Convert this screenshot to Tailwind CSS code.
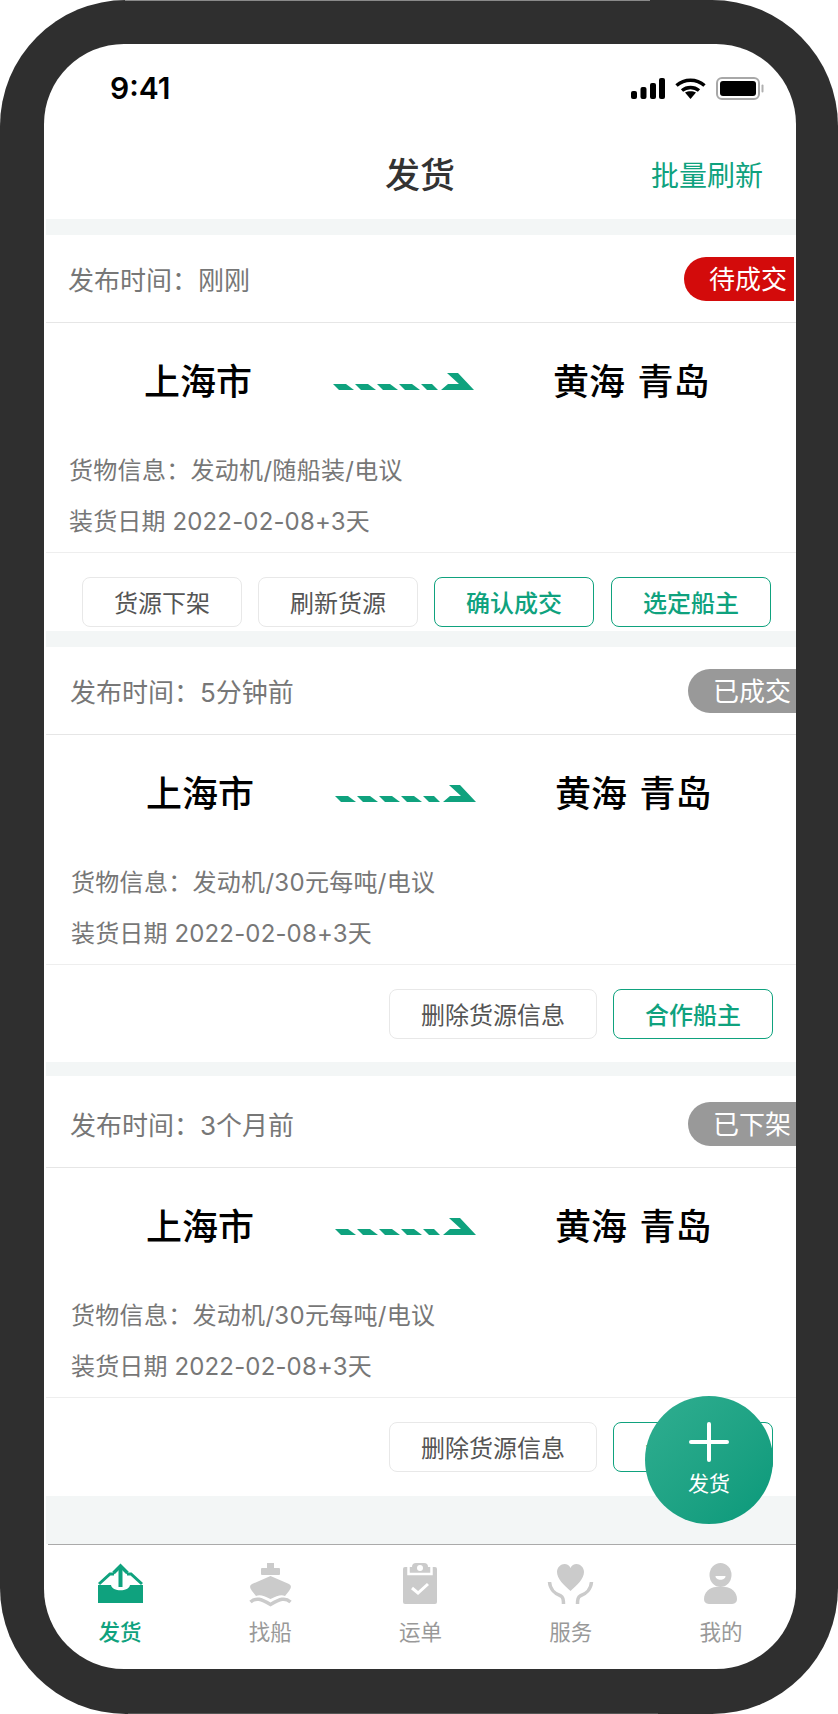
<!DOCTYPE html>
<html lang="zh">
<head>
    <meta charset="UTF-8">
    <meta name="viewport" content="width=device-width, initial-scale=1.0">
    <title>发货</title>
    <script src="https://cdn.jsdelivr.net/npm/@tailwindcss/browser@4"></script>
</head>
<body class="bg-white font-['Inter','Noto_Sans_CJK_SC',sans-serif]">
    <div class="relative w-[838px] h-[1714px] bg-[#2f2f2f] rounded-[126px] pt-[44px] pl-[44px] overflow-hidden">
        <div class="absolute left-[125px] top-0 w-[525px] h-[1px] bg-[#8a8a8a]"></div>
        <div class="absolute left-[128px] bottom-0 w-[530px] h-[1px] bg-[#555555]"></div>
        <div class="relative w-[752px] h-[1625px] bg-white rounded-[80px] overflow-hidden flex flex-col">
            <!-- status bar -->
            <div class="h-[85px] flex justify-between pt-[33px] pl-[66px] pr-[32px]">
                <span class="font-semibold text-[30px] leading-[22px] text-black">9:41</span>
                <div class="flex gap-[10px] h-[23px]">
                    <svg width="34" height="21" viewBox="0 0 34 21" class="mt-[1px]" fill="#000">
                        <rect x="0" y="13" width="6" height="8" rx="2"/>
                        <rect x="9.500" y="9" width="6" height="12" rx="2"/>
                        <rect x="19" y="5" width="6" height="16" rx="2"/>
                        <rect x="28" y="0" width="6" height="21" rx="2"/>
                    </svg>
                    <svg width="31" height="21" viewBox="0 0 31 21" class="mt-[1px]" fill="none" stroke="#000" stroke-width="3.500">
                        <path d="M1.500 7.500C9.500 0.500 21.500 0.500 29.500 7.500"/>
                        <path d="M7 12.500C12 8.500 19 8.500 24 12.500"/>
                        <path d="M10 14.500L15.500 21L21 14.500C18 12.800 13 12.800 10 14.500Z" fill="#000" stroke="none"/>
                    </svg>
                    <svg width="48" height="23" viewBox="0 0 48 23">
                        <rect x="1" y="1" width="42" height="21" rx="5" fill="none" stroke="#a8a8a8" stroke-width="2"/>
                        <rect x="4" y="4" width="36" height="15" rx="3" fill="#000"/>
                        <rect x="45.500" y="7.500" width="2" height="8" rx="1" fill="#b0b0b0"/>
                    </svg>
                </div>
            </div>

            <!-- nav -->
            <div class="relative h-[90px] flex items-center justify-center">
                <h1 class="text-[35px] font-medium text-[#333] leading-none mt-[2px]">发货</h1>
                <span class="absolute right-[33px] top-[33px] text-[28px] leading-[28px] text-[#0fa27e]">批量刷新</span>
            </div>

            <div class="ml-[2px] h-[16px] bg-[#f3f6f6]"></div>

            <!-- card 1 -->
            <div class="ml-[2px] bg-white">
                <div class="h-[87px] flex items-center justify-between pl-[22px] pr-[2px]">
                    <span class="mt-[4px] text-[26px] text-[#777] leading-none">发布时间：刚刚</span>
                    <span class="w-[110px] h-[44px] bg-[#d30b0b] rounded-l-full text-white text-[26px] leading-[45px] pl-[25px]">待成交</span>
                </div>
                <div class="h-[1px] bg-[#e6e6e6]"></div>
                <div class="h-[114px] flex items-center pt-[4px] pl-[98px]">
                    <span class="text-[36px] font-medium text-black leading-none">上海市</span>
                    <svg class="ml-[81px]" width="141" height="18" viewBox="0 0 141 18" fill="#0fa27e">
                        <polygon points="0,11 13,11 21,17 6,17"/>
                        <polygon points="22,11 35,11 43,17 28,17"/>
                        <polygon points="44,11 57,11 65,17 50,17"/>
                        <polygon points="66,11 79,11 87,17 72,17"/>
                        <polygon points="88,11 99,11 105,17 94,17"/>
                        <polygon points="108,17 115,11 126,11 114,0 125,0 141,17"/>
                    </svg>
                    <span class="ml-[79px] text-[36px] font-medium text-black leading-none [word-spacing:3px]">黄海 青岛</span>
                </div>
                <div class="h-[64px] flex items-center pt-[4px] pl-[23px] text-[24px] tracking-[0.3px] text-[#777]">货物信息：发动机/随船装/电议</div>
                <div class="h-[37px] flex items-center pt-[4px] pl-[23px] text-[24px] tracking-[0.15px] text-[#777]">装货日期 2022-02-08+3天</div>
                <div class="h-[14px]"></div>
                <div class="h-[1px] bg-[#eeeeee]"></div>
                <div class="h-[78px] pt-[24px] flex gap-[16px] pl-[36px]">
                    <button class="w-[160px] h-[50px] pt-[4px] rounded-[8px] border border-[#e8e8e8] text-[24px] text-[#555]">货源下架</button>
                    <button class="w-[160px] h-[50px] pt-[4px] rounded-[8px] border border-[#e8e8e8] text-[24px] text-[#555]">刷新货源</button>
                    <button class="w-[160px] h-[50px] pt-[4px] rounded-[8px] border border-[#0fa27e] text-[24px] font-medium text-[#0fa27e]">确认成交</button>
                    <button class="ml-[1px] w-[160px] h-[50px] pt-[4px] rounded-[8px] border border-[#0fa27e] text-[24px] font-medium text-[#0fa27e]">选定船主</button>
                </div>
            </div>

            <div class="ml-[2px] h-[16px] bg-[#f3f6f6]"></div>

            <!-- card 2 -->
            <div class="ml-[2px] bg-white">
                <div class="h-[87px] flex items-center justify-between pl-[24px]">
                    <span class="mt-[4px] text-[26px] text-[#777] leading-none">发布时间：5分钟前</span>
                    <span class="w-[110px] h-[44px] -mr-[2px] bg-[#999] rounded-l-full text-white text-[26px] leading-[45px] pl-[25px]">已成交</span>
                </div>
                <div class="h-[1px] bg-[#e6e6e6]"></div>
                <div class="h-[114px] flex items-center pt-[4px] pl-[100px]">
                    <span class="text-[36px] font-medium text-black leading-none">上海市</span>
                    <svg class="ml-[81px]" width="141" height="18" viewBox="0 0 141 18" fill="#0fa27e">
                        <polygon points="0,11 13,11 21,17 6,17"/>
                        <polygon points="22,11 35,11 43,17 28,17"/>
                        <polygon points="44,11 57,11 65,17 50,17"/>
                        <polygon points="66,11 79,11 87,17 72,17"/>
                        <polygon points="88,11 99,11 105,17 94,17"/>
                        <polygon points="108,17 115,11 126,11 114,0 125,0 141,17"/>
                    </svg>
                    <span class="ml-[79px] text-[36px] font-medium text-black leading-none [word-spacing:3px]">黄海 青岛</span>
                </div>
                <div class="h-[64px] flex items-center pt-[4px] pl-[25px] text-[24px] tracking-[0.3px] text-[#777]">货物信息：发动机/30元每吨/电议</div>
                <div class="h-[37px] flex items-center pt-[4px] pl-[25px] text-[24px] tracking-[0.15px] text-[#777]">装货日期 2022-02-08+3天</div>
                <div class="h-[14px]"></div>
                <div class="h-[1px] bg-[#eeeeee]"></div>
                <div class="h-[97px] pt-[24px] flex justify-end gap-[16px] pr-[23px]">
                    <button class="w-[208px] h-[50px] pt-[4px] rounded-[8px] border border-[#e8e8e8] text-[24px] text-[#555]">删除货源信息</button>
                    <button class="w-[160px] h-[50px] pt-[4px] rounded-[8px] border border-[#0fa27e] text-[24px] font-medium text-[#0fa27e]">合作船主</button>
                </div>
            </div>

            <div class="ml-[2px] h-[14px] bg-[#f3f6f6]"></div>

            <!-- card 3 -->
            <div class="ml-[2px] bg-white">
                <div class="h-[91px] pt-[4px] flex items-center justify-between pl-[24px]">
                    <span class="mt-[4px] text-[26px] text-[#777] leading-none">发布时间：3个月前</span>
                    <span class="w-[110px] h-[44px] -mr-[2px] bg-[#999] rounded-l-full text-white text-[26px] leading-[45px] pl-[25px]">已下架</span>
                </div>
                <div class="h-[1px] bg-[#e6e6e6]"></div>
                <div class="h-[114px] flex items-center pt-[4px] pl-[100px]">
                    <span class="text-[36px] font-medium text-black leading-none">上海市</span>
                    <svg class="ml-[81px]" width="141" height="18" viewBox="0 0 141 18" fill="#0fa27e">
                        <polygon points="0,11 13,11 21,17 6,17"/>
                        <polygon points="22,11 35,11 43,17 28,17"/>
                        <polygon points="44,11 57,11 65,17 50,17"/>
                        <polygon points="66,11 79,11 87,17 72,17"/>
                        <polygon points="88,11 99,11 105,17 94,17"/>
                        <polygon points="108,17 115,11 126,11 114,0 125,0 141,17"/>
                    </svg>
                    <span class="ml-[79px] text-[36px] font-medium text-black leading-none [word-spacing:3px]">黄海 青岛</span>
                </div>
                <div class="h-[64px] flex items-center pt-[4px] pl-[25px] text-[24px] tracking-[0.3px] text-[#777]">货物信息：发动机/30元每吨/电议</div>
                <div class="h-[37px] flex items-center pt-[4px] pl-[25px] text-[24px] tracking-[0.15px] text-[#777]">装货日期 2022-02-08+3天</div>
                <div class="h-[14px]"></div>
                <div class="h-[1px] bg-[#eeeeee]"></div>
                <div class="h-[98px] pt-[24px] flex justify-end gap-[16px] pr-[23px]">
                    <button class="w-[208px] h-[50px] pt-[4px] rounded-[8px] border border-[#e8e8e8] text-[24px] text-[#555]">删除货源信息</button>
                    <button class="w-[160px] h-[50px] pt-[4px] rounded-[8px] border border-[#0fa27e] text-[24px] font-medium text-[#0fa27e]">合作船主</button>
                </div>
            </div>

            <div class="ml-[2px] h-[48px] bg-[#f3f6f6]"></div>

            <!-- tab bar -->
            <div class="ml-[4px] h-[1px] bg-[#aaaaaa]"></div>
            <div class="flex-1 grid grid-cols-5 pt-[18px] pl-[1px] text-[21.500px] leading-[24px] text-[#999]">
                <div class="flex flex-col items-center">
                    <svg width="45" height="44" viewBox="0 0 45 44">
                        <g transform="translate(0 2)">
                            <path d="M0 20H13C14 27 31 27 32 20H45V38H0Z" fill="#0fa27e"/>
                            <path d="M1 19L12 9H16M44 19L33 9H29" fill="none" stroke="#0fa27e" stroke-width="3"/>
                            <path d="M22.500 22V2" stroke="#0fa27e" stroke-width="4" fill="none"/>
                            <path d="M15.500 8L22.500 1L29.500 8" stroke="#0fa27e" stroke-width="3.500" fill="none"/>
                        </g>
                    </svg>
                    <span class="mt-[13px] font-medium text-[#0fa27e]">发货</span>
                </div>
                <div class="flex flex-col items-center">
                    <svg width="43" height="44" viewBox="0 0 43 44" fill="#cbcbcb">
                        <rect x="18" y="0" width="7" height="6"/>
                        <rect x="12" y="5" width="19" height="7" rx="1"/>
                        <path d="M21.500 13L40 21C43 23 42 25 40 28L36 33C32 31 28 33 21.500 36C15 33 11 31 7 33L3 28C1 25 0 23 3 21Z"/>
                        <path d="M1.500 39C7 34 12 36 21.500 41.500C31 36 36 34 41.500 39" fill="none" stroke="#cbcbcb" stroke-width="3.500"/>
                    </svg>
                    <span class="mt-[13px]">找船</span>
                </div>
                <div class="flex flex-col items-center">
                    <svg width="34" height="44" viewBox="0 0 34 44" fill="#cbcbcb">
                        <rect x="0" y="4" width="34" height="37" rx="2"/>
                        <path d="M5.500 4V11H28.500V4" fill="none" stroke="#fff" stroke-width="2.500"/>
                        <rect x="9" y="0" width="16" height="9" rx="4" />
                        <circle cx="17" cy="5" r="3" fill="#fff"/>
                        <path d="M9 25L15 30L25 21" fill="none" stroke="#fff" stroke-width="3"/>
                    </svg>
                    <span class="mt-[13px]">运单</span>
                </div>
                <div class="flex flex-col items-center">
                    <svg width="47" height="44" viewBox="0 0 47 44" fill="none">
                        <path d="M23.500 28C17 22 10 16 10 9C10 4 14 1 17.500 1C20 1 22.500 2.500 23.500 5C24.500 2.500 27 1 29.500 1C33 1 37 4 37 9C37 16 30 22 23.500 28Z" fill="#cbcbcb"/>
                        <path d="M2.500 19C3 26 8 31 14 33C16 34 16.500 37 16.500 41M44.500 19C44 26 39 31 33 33C31 34 30.500 37 30.500 41" stroke="#cbcbcb" stroke-width="3.500"/>
                    </svg>
                    <span class="mt-[13px]">服务</span>
                </div>
                <div class="flex flex-col items-center">
                    <svg width="33" height="44" viewBox="0 0 33 44" fill="#cbcbcb">
                        <ellipse cx="16.500" cy="12" rx="11" ry="12"/>
                        <path d="M11.500 13H21.500C21.500 18 11.500 18 11.500 13Z" fill="#fff"/>
                        <path d="M0 36C0 29 6 24 12 24H21C27 24 33 29 33 36C33 40 30 41 27 41H6C3 41 0 40 0 36Z"/>
                    </svg>
                    <span class="mt-[13px]">我的</span>
                </div>
            </div>

            <!-- floating button -->
            <div class="absolute left-[601px] top-[1352px] w-[128px] h-[128px] rounded-full bg-gradient-to-br from-[#2fae90] to-[#07997a] flex flex-col items-center text-white">
                <svg class="mt-[26px]" width="40" height="40" viewBox="0 0 40 40" fill="#fff">
                    <rect x="18" y="0" width="4" height="40" rx="2"/>
                    <rect x="0" y="18" width="40" height="4" rx="2"/>
                </svg>
                <span class="text-[21px] leading-[24px] mt-[10px]">发货</span>
            </div>
        </div>
    </div>
</body>
</html>
